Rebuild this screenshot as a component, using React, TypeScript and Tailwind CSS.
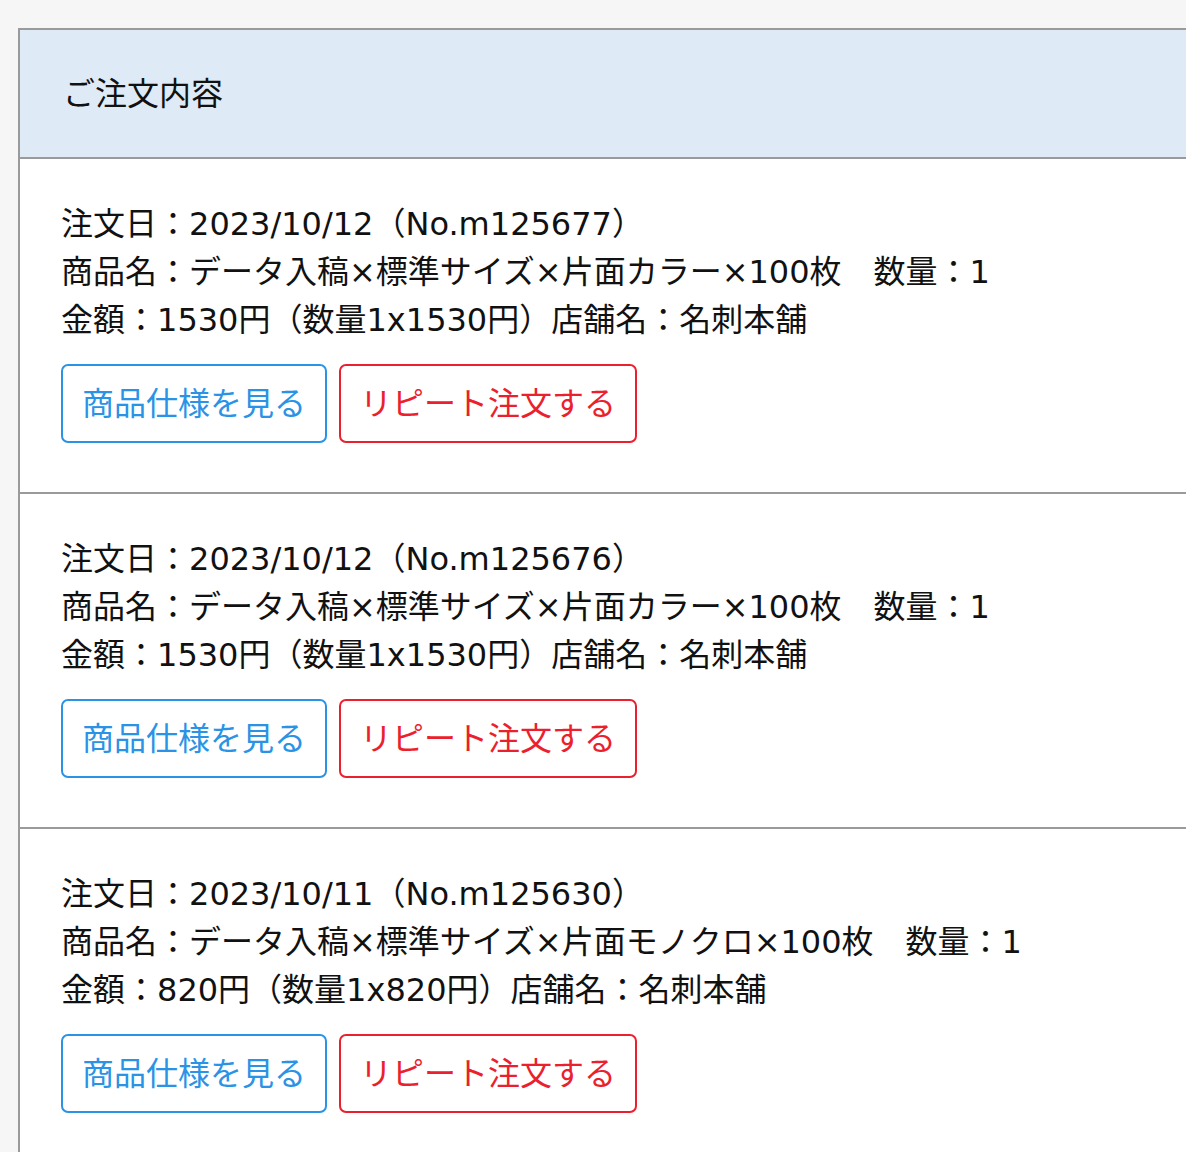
const orders = [
  {
    date: '2023/10/12',
    no: 'm125677',
    name: 'データ入稿×標準サイズ×片面カラー×100枚',
    qty: 1,
    price: '1530',
    shop: '名刺本舗',
  },
  {
    date: '2023/10/12',
    no: 'm125676',
    name: 'データ入稿×標準サイズ×片面カラー×100枚',
    qty: 1,
    price: '1530',
    shop: '名刺本舗',
  },
  {
    date: '2023/10/11',
    no: 'm125630',
    name: 'データ入稿×標準サイズ×片面モノクロ×100枚',
    qty: 1,
    price: '820',
    shop: '名刺本舗',
  },
]

export default function App() {
  return (
    <div
      className="h-[1152px] w-[1186px] overflow-hidden bg-[#f6f6f6] pl-[18px] pt-[28px] text-[#111]"
      style={{ fontFamily: '"DejaVu Sans", "Noto Sans CJK JP", sans-serif' }}
    >
      <div className="w-[1200px] border-2 border-[#9a9a9a] bg-white">
        <div className="flex h-[129px] items-center border-b-2 border-[#9a9a9a] bg-[#deebf6] pl-[43px] text-[32px]">
          ご注文内容
        </div>

        {orders.map((o) => (
          <div key={o.no} className="border-b-2 border-[#9a9a9a] pb-[49px] pl-[41px] pt-[41px]">
            <div className="text-[32px] leading-[48px]">
              <p>
                注文日：{o.date}（No.{o.no}）
              </p>
              <p>
                商品名：{o.name}　数量：{o.qty}
              </p>
              <p>
                金額：{o.price}円（数量{o.qty}x{o.price}円）店舗名：{o.shop}
              </p>
            </div>
            <div className="mt-[20px] flex gap-[12px]">
              <button className="h-[79px] rounded-[7px] border-2 border-[#2a93e6] px-[19px] text-[32px] text-[#2a93e6]">
                商品仕様を見る
              </button>
              <button className="h-[79px] rounded-[7px] border-2 border-[#eb1f2d] px-[19px] text-[32px] text-[#eb1f2d]">
                リピート注文する
              </button>
            </div>
          </div>
        ))}
      </div>
    </div>
  )
}
